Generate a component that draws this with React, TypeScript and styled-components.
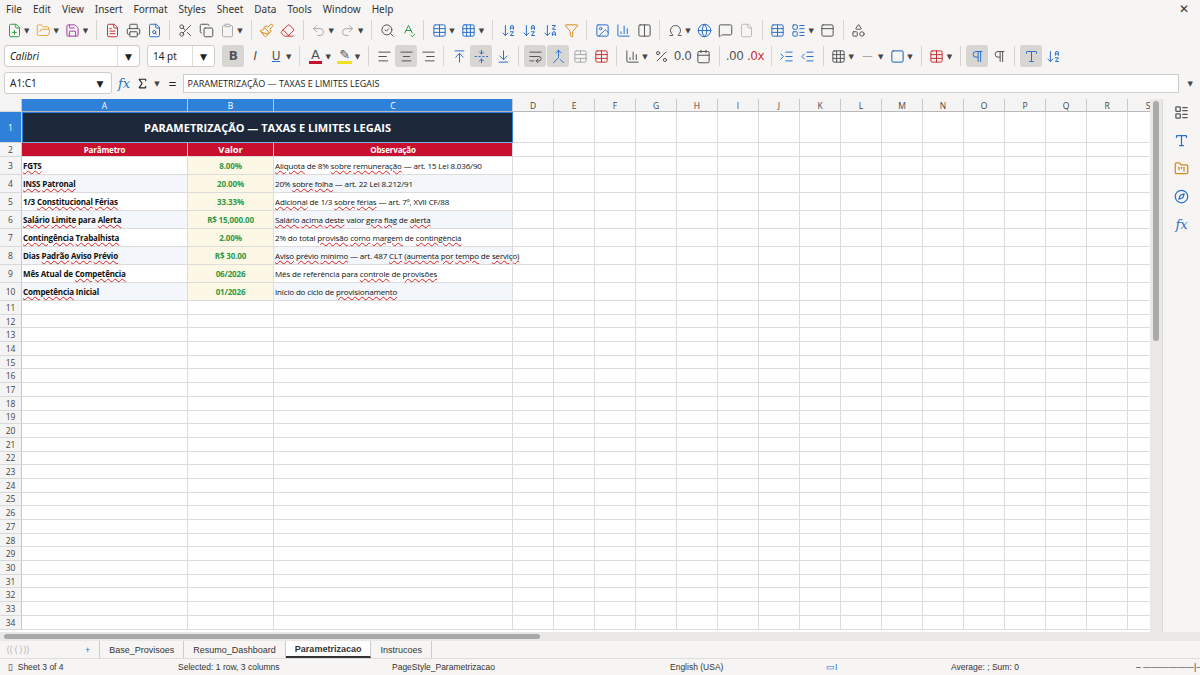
import React from "react"
import styled, { createGlobalStyle } from "styled-components"
import {
  FilePlus, FolderOpen, Save, FileText, Printer, FileSearch, Scissors, Copy, Clipboard,
  Paintbrush, Eraser, Undo2, Redo2, SearchCheck, SpellCheck, Table, Grid3x3, ArrowDownAZ,
  ArrowDownZA, Filter, Image, BarChart3, Sigma, Omega, Globe, MessageSquare, File,
  PanelTop, Shapes, Menu, LayoutList, Type, FolderKanban, Compass,
  AlignLeft, AlignCenter, AlignRight, ArrowUpToLine, FoldVertical, ArrowDownToLine,
  WrapText, Merge, TableCellsMerge, Percent, Calendar, IndentIncrease, IndentDecrease,
  Square, Minus, Pilcrow, Columns2,
} from "lucide-react"

const GlobalStyle = createGlobalStyle`
  html, body { margin: 0; padding: 0; background: #f6f5f4; }
  body { font-family: "Noto Sans", "DejaVu Sans", sans-serif; font-size: 11px; color: #222; }
  * { box-sizing: border-box; }
`

const Frame = styled.div`
  width: 1200px; height: 675px; display: flex; flex-direction: column; overflow: hidden;
`
const MenuBar = styled.div`
  height: 17px; flex-shrink: 0; display: flex; align-items: center; padding-left: 6px;
  font-size: 10px; color: #333;
  span { margin-right: 11px; }
`
const Close = styled.span`
  margin-left: auto; margin-right: 12px; font-size: 12px;
`
const ToolRow = styled.div`
  height: 26px; flex-shrink: 0; display: flex; align-items: center; padding-left: 4px; gap: 1px;
`
const Btn = styled.div<{ $on?: boolean; $c?: string }>`
  width: ${p => (p.$on ? 22 : 20)}px; height: 22px; display: flex; align-items: center; justify-content: center;
  border-radius: 3px; background: ${p => (p.$on ? "#d8d6d3" : "transparent")};
  color: ${p => p.$c || "#555"};
`
const Drop = styled.span`
  font-size: 7px; color: #444; margin: 0 3px 0 -1px;
`
const Sep = styled.div`
  width: 1px; height: 20px; background: #d6d4d1; margin: 0 4px;
`
const Combo = styled.div<{ $w: number; $italic?: boolean }>`
  width: ${p => p.$w}px; height: 22px; background: #fff; border: 1px solid #cfcdca; border-radius: 3px;
  display: flex; align-items: center; padding-left: 5px; font-size: 10px;
  font-style: ${p => (p.$italic ? "italic" : "normal")}; margin-right: 6px;
  span { flex: 1; }
  i { width: 22px; height: 100%; border-left: 1px solid #e0dedb; display: flex; align-items: center; justify-content: center; font-style: normal; font-size: 9px; }
`
const Letter = styled.span<{ $b?: boolean; $i?: boolean; $u?: boolean }>`
  font-family: "DejaVu Sans", sans-serif; font-size: 12px; font-weight: ${p => (p.$b ? 700 : 400)};
  font-style: ${p => (p.$i ? "italic" : "normal")}; text-decoration: ${p => (p.$u ? "underline" : "none")};
  text-decoration-color: #2a6fc9; letter-spacing: -0.5px;
`
const ColorA = styled.span<{ $bar: string }>`
  font-family: "DejaVu Sans", sans-serif; font-size: 13px; line-height: 13px; border-bottom: 3px solid ${p => p.$bar};
  padding: 0 2px;
`
const FormulaBar = styled.div`
  height: 26px; flex-shrink: 0; display: flex; align-items: center; padding: 0 4px; gap: 6px; margin-top: 1px;
`
const NameBox = styled.div`
  width: 108px; height: 22px; background: #fff; border: 1px solid #cfcdca; border-radius: 3px;
  display: flex; align-items: center; padding-left: 5px; font-size: 10px;
  span { flex: 1; }
  i { width: 22px; text-align: center; font-style: normal; font-size: 9px; }
`
const Fx = styled.span`
  font-family: "DejaVu Serif", serif; font-style: italic; color: #2a6fc9; font-size: 13px;
`
const Input = styled.div`
  flex: 1; height: 19px; background: #fff; border: 1px solid #cfcdca; display: flex; align-items: center;
  padding-left: 4px; font-size: 9px; margin-right: 4px; font-family: "Open Sans", sans-serif;
`
const Body = styled.div`
  flex: 1 1 0; display: flex; min-height: 0; overflow: hidden; margin-top: 3px;
`
const SheetArea = styled.div`
  flex: 1; display: flex; flex-direction: column; background: #fff; overflow: hidden; min-height: 0;
  font-family: "Open Sans", "Liberation Sans", sans-serif;
`
const VScroll = styled.div`
  width: 12px; background: #e9e8e6; display: flex; justify-content: center; padding-top: 2px;
  div { width: 6px; height: 240px; background: #aaa; border-radius: 3px; }
`
const SideBar = styled.div`
  width: 38px; display: flex; flex-direction: column; align-items: center; gap: 13px; margin-top: -22px;
  color: #555; border-left: 1px solid #dcdad7;
`
const Row = styled.div<{ $h: number }>`
  display: flex; height: ${p => p.$h}px; flex-shrink: 0;
`
const RowHead = styled.div<{ $sel?: boolean }>`
  width: 22px; flex-shrink: 0; display: flex; align-items: center; justify-content: center;
  font-size: 8.5px; color: ${p => (p.$sel ? "#fff" : "#444")};
  background: ${p => (p.$sel ? "#2f80d9" : "#f4f4f4")};
  border-right: 1px solid #c9c9c9; border-bottom: 1px solid #d9d9d9;
`
const ColHead = styled.div<{ $w: number; $sel?: boolean }>`
  width: ${p => p.$w}px; flex-shrink: 0; display: flex; align-items: center; justify-content: center;
  font-size: 8.5px; color: ${p => (p.$sel ? "#fff" : "#444")};
  background: ${p => (p.$sel ? "#2f80d9" : "#f4f4f4")};
  border-right: 1px solid #c9c9c9; border-bottom: 1px solid #b9b9b9;
`
const Cell = styled.div<{ $w: number; $bg?: string; $align?: string; $color?: string; $bold?: boolean }>`
  width: ${p => p.$w}px; flex-shrink: 0; display: flex; align-items: center; overflow: visible; white-space: pre;
  justify-content: ${p => p.$align || "flex-start"}; padding: 0 1px;
  background: ${p => p.$bg || "transparent"}; color: ${p => p.$color || "#111"};
  font-weight: ${p => (p.$bold ? 700 : 400)}; font-size: 8px; letter-spacing: -0.15px;
  border-right: 1px solid #dcdcdc; border-bottom: 1px solid #dcdcdc;
`
const Title = styled.div`
  width: 491px; flex-shrink: 0; background: #1d283a; color: #fff; font-weight: 700; font-size: 11px;
  display: flex; align-items: center; justify-content: center; border: 1.5px solid #2f80d9; border-bottom-color: #7fb0e6;
`
const Spell = styled.span`
  text-decoration: underline wavy #e02020; text-decoration-thickness: 1px; text-underline-offset: 1px;
`
const HScroll = styled.div`
  height: 9px; flex-shrink: 0; background: #e9e8e6; display: flex; align-items: center; padding-left: 4px;
  div { width: 536px; height: 5px; background: #a9a9a9; border-radius: 3px; }
`
const Tabs = styled.div`
  height: 17px; flex-shrink: 0; display: flex; align-items: center; font-size: 9px; color: #333; padding-left: 6px;
  font-family: "Liberation Sans", sans-serif;
`
const Nav = styled.span`
  color: #bbb; letter-spacing: -1px; font-size: 10px; width: 70px;
`
const Tab = styled.span<{ $on?: boolean }>`
  padding: 0 9px; border-right: 1px solid #ccc; font-weight: ${p => (p.$on ? 700 : 400)};
  height: 100%; display: flex; align-items: center; background: ${p => (p.$on ? "#fff" : "transparent")};
  border-bottom: ${p => (p.$on ? "2px solid #333" : "none")};
`
const Status = styled.div`
  height: 17px; flex-shrink: 0; display: grid; align-items: center; font-size: 8.5px; color: #333;
  grid-template-columns: 170px 214px 278px 156px 125px 185px 1fr;
  padding-left: 8px; font-family: "Liberation Sans", sans-serif; border-top: 1px solid #ddd;
  white-space: nowrap;
`

const colsRest = "DEFGHIJKLMNOPQRS".split("")
const W = [166, 86, 239]
const whitelist = new Set(["—", "art.", "de", "do", "da", "para", "Lei", "total", "valor", "Dias", "CF/88", "XVII", "7º,", "20%", "2%", "1/3", "Mês", "Atual", "Inicial", "Início", "ciclo", "referência"])

const spelled = (t: string) => (
  <span>
    {t.split(" ").map((w, i) => (
      <React.Fragment key={i}>
        {i > 0 && " "}
        {whitelist.has(w) || /^[\d.,/%]+$/.test(w) ? w : <Spell>{w}</Spell>}
      </React.Fragment>
    ))}
  </span>
)

const data: [string, string, string][] = [
  ["FGTS", "8.00%", "Alíquota de 8% sobre remuneração — art. 15 Lei 8.036/90"],
  ["INSS Patronal", "20.00%", "20% sobre folha — art. 22 Lei 8.212/91"],
  ["1/3 Constitucional Férias", "33.33%", "Adicional de 1/3 sobre férias — art. 7º, XVII CF/88"],
  ["Salário Limite para Alerta", "R$ 15,000.00", "Salário acima deste valor gera flag de alerta"],
  ["Contingência Trabalhista", "2.00%", "2% do total provisão como margem de contingência"],
  ["Dias Padrão Aviso Prévio", "R$ 30.00", "Aviso prévio mínimo — art. 487 CLT (aumenta por tempo de serviço)"],
  ["Mês Atual de Competência", "06/2026", "Mês de referência para controle de provisões"],
  ["Competência Inicial", "01/2026", "Início do ciclo de provisionamento"],
]

const Empty = () => (
  <>
    {colsRest.map(c => <Cell key={c} $w={41} />)}
  </>
)

export default function App() {
  const ic = (I: any, c = "#555", on = false) => <Btn $on={on} $c={c}><I size={15} strokeWidth={1.6} /></Btn>
  return (
    <Frame>
      <GlobalStyle />
      <MenuBar>
        {["File", "Edit", "View", "Insert", "Format", "Styles", "Sheet", "Data", "Tools", "Window", "Help"].map(m => <span key={m}>{m}</span>)}
        <Close>✕</Close>
      </MenuBar>
      <ToolRow>
        {ic(FilePlus, "#2e9a4a")}<Drop>▼</Drop>{ic(FolderOpen, "#e8a93a")}<Drop>▼</Drop>{ic(Save, "#a23ca6")}<Drop>▼</Drop><Sep />
        {ic(FileText, "#c33")}{ic(Printer)}{ic(FileSearch, "#2a6fc9")}<Sep />
        {ic(Scissors)}{ic(Copy)}{ic(Clipboard, "#aaa")}<Drop>▼</Drop><Sep />
        {ic(Paintbrush, "#d48a1c")}{ic(Eraser, "#c33")}<Sep />
        {ic(Undo2, "#aaa")}<Drop>▼</Drop>{ic(Redo2, "#aaa")}<Drop>▼</Drop><Sep />
        {ic(SearchCheck)}{ic(SpellCheck, "#2e9a4a")}<Sep />
        {ic(Table, "#2a6fc9")}<Drop>▼</Drop>{ic(Grid3x3, "#2a6fc9")}<Drop>▼</Drop><Sep />
        {ic(ArrowDownAZ, "#2a6fc9")}{ic(ArrowDownAZ, "#2a6fc9")}{ic(ArrowDownZA, "#2a6fc9")}{ic(Filter, "#d48a1c")}<Sep />
        {ic(Image, "#2a6fc9")}{ic(BarChart3, "#2a6fc9")}{ic(Columns2)}<Sep />
        {ic(Omega)}<Drop>▼</Drop>{ic(Globe, "#2a6fc9")}{ic(MessageSquare)}{ic(File, "#bbb")}<Sep />
        {ic(Table, "#2a6fc9")}{ic(LayoutList, "#2a6fc9")}<Drop>▼</Drop>{ic(PanelTop)}<Sep />{ic(Shapes)}
      </ToolRow>
      <ToolRow>
        <Combo $w={136} $italic><span>Calibri</span><i>▼</i></Combo>
        <Combo $w={68}><span>14 pt</span><i>▼</i></Combo>
        <Btn $on><Letter $b>B</Letter></Btn><Btn><Letter $i>I</Letter></Btn><Btn><Letter $u>U</Letter></Btn><Drop>▼</Drop><Sep />
        <Btn><ColorA $bar="#c8102e">A</ColorA></Btn><Drop>▼</Drop><Btn><ColorA $bar="#f0e020">✎</ColorA></Btn><Drop>▼</Drop><Sep />
        {ic(AlignLeft)}{ic(AlignCenter, "#555", true)}{ic(AlignRight)}<Sep />
        {ic(ArrowUpToLine, "#2a6fc9")}{ic(FoldVertical, "#2a6fc9", true)}{ic(ArrowDownToLine, "#2a6fc9")}<Sep />
        {ic(WrapText, "#555", true)}{ic(Merge, "#2a6fc9", true)}{ic(TableCellsMerge, "#aaa")}{ic(Table, "#c33")}<Sep />
        {ic(BarChart3)}<Drop>▼</Drop>{ic(Percent)}<Btn><Letter>0.0</Letter></Btn>{ic(Calendar)}<Sep />
        <Btn><Letter>.00</Letter></Btn><Btn $c="#c33"><Letter>.0x</Letter></Btn><Sep />
        {ic(IndentIncrease, "#2a6fc9")}{ic(IndentDecrease, "#2a6fc9")}<Sep />
        {ic(Grid3x3)}<Drop>▼</Drop>{ic(Minus, "#aaa")}<Drop>▼</Drop>{ic(Square, "#1f5fae")}<Drop>▼</Drop><Sep />
        {ic(Table, "#c33")}<Drop>▼</Drop><Sep />
        {ic(Pilcrow, "#2a6fc9", true)}{ic(Pilcrow)}<Sep />{ic(Type, "#2a6fc9", true)}{ic(ArrowDownAZ, "#2a6fc9")}
      </ToolRow>
      <FormulaBar>
        <NameBox><span>A1:C1</span><i>▼</i></NameBox>
        <Fx>fx</Fx><Sigma size={13} /><Drop>▼</Drop><span style={{ fontSize: 14 }}>=</span>
        <Input>PARAMETRIZAÇÃO — TAXAS E LIMITES LEGAIS</Input>
        <Drop>▼</Drop>
      </FormulaBar>
      <Body>
        <SheetArea>
          <Row $h={13}>
            <RowHead />
            {["A", "B", "C"].map((c, i) => <ColHead key={c} $w={W[i]} $sel>{c}</ColHead>)}
            {colsRest.map(c => <ColHead key={c} $w={41}>{c}</ColHead>)}
          </Row>
          <Row $h={31}>
            <RowHead $sel>1</RowHead>
            <Title>PARAMETRIZAÇÃO — TAXAS E LIMITES LEGAIS</Title>
            <Empty />
          </Row>
          <Row $h={14}>
            <RowHead>2</RowHead>
            <Cell $w={W[0]} $bg="#c8102e" $color="#fff" $bold $align="center">Parâmetro</Cell>
            <Cell $w={W[1]} $bg="#c8102e" $color="#fff" $bold $align="center" style={{ fontSize: 9.5 }}>Valor</Cell>
            <Cell $w={W[2]} $bg="#c8102e" $color="#fff" $bold $align="center">Observação</Cell>
            <Empty />
          </Row>
          {data.map((r, i) => (
            <Row $h={18} key={i}>
              <RowHead>{i + 3}</RowHead>
              <Cell $w={W[0]} $bg={i % 2 ? "#f3f6fa" : "#fff"} $bold>{spelled(r[0])}</Cell>
              <Cell $w={W[1]} $bg="#fdf8e6" $color="#2e9a4a" $bold $align="center">{r[1]}</Cell>
              <Cell $w={W[2]} $bg={i % 2 ? "#f3f6fa" : "#fff"}>{spelled(r[2])}</Cell>
              <Empty />
            </Row>
          ))}
          {Array.from({ length: 24 }, (_, i) => (
            <Row $h={13.7} key={"e" + i}>
              <RowHead>{i + 11}</RowHead>
              {W.map((w, j) => <Cell key={j} $w={w} />)}
              <Empty />
            </Row>
          ))}
        </SheetArea>
        <VScroll><div /></VScroll>
        <SideBar>
          <Menu size={15} /><LayoutList size={15} /><Type size={15} color="#2a6fc9" /><FolderKanban size={15} color="#d48a1c" />
          <Compass size={15} color="#2a6fc9" /><Fx>fx</Fx>
        </SideBar>
      </Body>
      <HScroll><div /></HScroll>
      <Tabs>
        <Nav>⟨⟨ ⟨ ⟩ ⟩⟩</Nav>
        <Tab style={{ color: "#2a6fc9" }}>+</Tab>
        <Tab>Base_Provisoes</Tab><Tab>Resumo_Dashboard</Tab><Tab $on>Parametrizacao</Tab><Tab>Instrucoes</Tab>
      </Tabs>
      <Status>
        <span>▯ &nbsp;Sheet 3 of 4</span>
        <span>Selected: 1 row, 3 columns</span>
        <span>PageStyle_Parametrizacao</span>
        <span>English (USA)</span>
        <span style={{ color: "#2a6fc9" }}>▭I</span>
        <span>Average: ; Sum: 0</span>
        <span>– ——————|——— + &nbsp;&nbsp;100%</span>
      </Status>
    </Frame>
  )
}
